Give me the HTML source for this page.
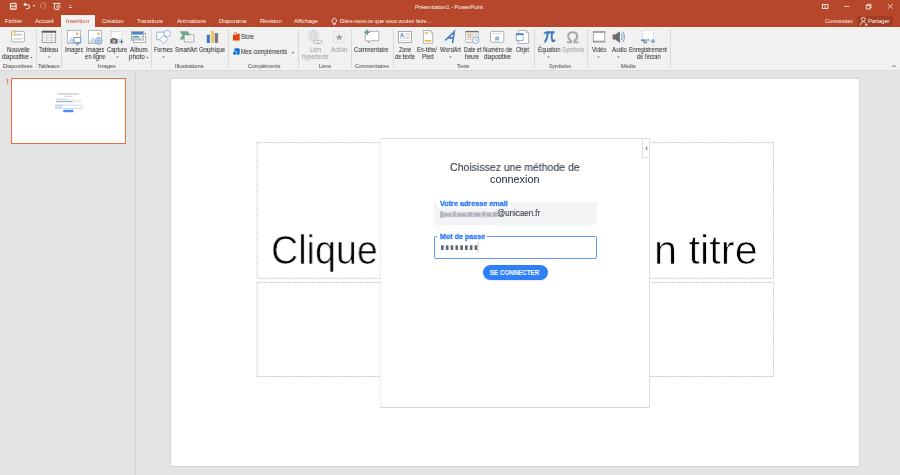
<!DOCTYPE html>
<html><head><meta charset="utf-8">
<style>
html,body{margin:0;padding:0;}
body{width:900px;height:475px;overflow:hidden;position:relative;background:#e4e4e4;font-family:"Liberation Sans",sans-serif;}
.a{position:absolute;}
.t{position:absolute;white-space:nowrap;line-height:1;transform-origin:0 0;will-change:transform;}
.sep{position:absolute;top:29px;width:1px;height:39px;background:#dadada;}
</style></head><body>
<div class="a" style="left:0;top:0;width:900px;height:27px;background:#b7472a"></div>
<div class="a" style="left:61px;top:15px;width:34px;height:12px;background:#f1f1f1"></div>
<div class="a" style="left:857px;top:15.5px;width:36px;height:10.5px;background:#a23e24"></div>
<div class="a" style="left:0;top:27px;width:900px;height:43px;background:#f1f1f1"></div>
<div class="a" style="left:0;top:70px;width:900px;height:1px;background:#d9d9d9"></div>
<div class="sep" style="left:36px"></div>
<div class="sep" style="left:61px"></div>
<div class="sep" style="left:151px"></div>
<div class="sep" style="left:228px"></div>
<div class="sep" style="left:298px"></div>
<div class="sep" style="left:351px"></div>
<div class="sep" style="left:392.5px"></div>
<div class="sep" style="left:534px"></div>
<div class="sep" style="left:586.5px"></div>
<div class="sep" style="left:670px"></div>
<!-- thumbnail pane separator -->
<div class="a" style="left:135px;top:71px;width:1px;height:404px;background:#d4d4d4"></div>
<!-- thumbnail -->
<div class="a" style="left:11px;top:78px;width:112.5px;height:63.5px;border:1.3px solid #ec6e47;background:#fff"></div>
<svg class="a" style="left:0;top:0" width="135" height="150" viewBox="0 0 135 150">
<rect x="57.8" y="93.3" width="21.4" height="1.2" fill="#c2c5ca"/>
<rect x="64.1" y="95.8" width="8" height="0.9" fill="#c8cbd0"/>
<rect x="55.3" y="99.5" width="26.8" height="3.5" fill="#eef0f3"/>
<rect x="55.9" y="98.8" width="11.2" height="0.8" fill="#b0cbf7"/>
<rect x="56" y="101" width="16.7" height="1" fill="#b0b4ba"/>
<rect x="55.4" y="105.1" width="26.6" height="3.5" fill="#fff" stroke="#a8c6f8" stroke-width="0.6"/>
<rect x="56" y="104.7" width="7" height="0.8" fill="#a8c6f8"/>
<rect x="56" y="106.6" width="6.4" height="1" fill="#c0c3c8"/>
<rect x="63" y="109.8" width="10.6" height="2.4" rx="1.2" fill="#4a8ef6"/>
</svg>
<svg class="a" style="left:0;top:72px" width="12" height="16" viewBox="0 72 12 16"><path d="M6 80.4 L7.6 79.2 V84.2" fill="none" stroke="#e8704a" stroke-width="0.9"/></svg>
<!-- slide -->
<div class="a" style="left:170px;top:78px;width:690px;height:389px;background:#d6d6d6"></div>
<div class="a" style="left:171px;top:79px;width:688px;height:387px;background:#fff"></div>
<!-- placeholders -->
<svg class="a" style="left:0;top:0" width="900" height="475" viewBox="0 0 900 475"><g fill="none" stroke="#c6c6c6" stroke-width="0.9" stroke-dasharray="2.6 0.9 1.6 0.9">
<rect x="257.2" y="142.6" width="516.3" height="135.7"/>
<rect x="257.2" y="282.5" width="516.3" height="94"/></g></svg>
<div class='t' style="left:415.35px;top:4.30px;font-size:6.0px;color:#ffffff;transform:scaleX(0.9319);">Présentation1 - PowerPoint</div>
<div class='t' style="left:4.54px;top:18.00px;font-size:6.0px;color:#ffffff;transform:scaleX(0.9573);">Fichier</div>
<div class='t' style="left:35.00px;top:18.00px;font-size:6.0px;color:#ffffff;transform:scaleX(0.9647);">Accueil</div>
<div class='t' style="left:66.16px;top:18.00px;font-size:6.0px;color:#c8462a;transform:scaleX(0.9997);">Insertion</div>
<div class='t' style="left:102.22px;top:18.00px;font-size:6.0px;color:#ffffff;transform:scaleX(0.9359);">Création</div>
<div class='t' style="left:137.29px;top:18.00px;font-size:6.0px;color:#ffffff;transform:scaleX(0.8926);">Transitions</div>
<div class='t' style="left:177.00px;top:18.00px;font-size:6.0px;color:#ffffff;transform:scaleX(0.9738);">Animations</div>
<div class='t' style="left:218.75px;top:18.00px;font-size:6.0px;color:#ffffff;transform:scaleX(0.9380);">Diaporama</div>
<div class='t' style="left:259.55px;top:18.00px;font-size:6.0px;color:#ffffff;transform:scaleX(0.9385);">Révision</div>
<div class='t' style="left:294.20px;top:18.00px;font-size:6.0px;color:#ffffff;transform:scaleX(0.9651);">Affichage</div>
<div class='t' style="left:339.56px;top:18.00px;font-size:6.0px;color:#ffffff;transform:scaleX(0.9087);">Dites-nous ce que vous voulez faire...</div>
<div class='t' style="left:824.71px;top:18.00px;font-size:6.0px;color:#ffffff;transform:scaleX(0.9636);">Connexion</div>
<div class='t' style="left:868.25px;top:18.00px;font-size:6.0px;color:#ffffff;transform:scaleX(0.9352);">Partager</div>
<div class='t' style="left:6.53px;top:47.10px;font-size:6.3px;color:#1a1a1a;transform:scaleX(0.9263);">Nouvelle</div>
<div class='t' style="left:2.27px;top:54.20px;font-size:6.3px;color:#1a1a1a;transform:scaleX(0.8989);">diapositive</div>
<div class='t' style="left:3.06px;top:64.00px;font-size:5.9px;color:#444444;transform:scaleX(0.9316);">Diapositives</div>
<div class='t' style="left:39.39px;top:47.10px;font-size:6.3px;color:#1a1a1a;transform:scaleX(0.8594);">Tableau</div>
<div class='t' style="left:38.39px;top:64.00px;font-size:5.9px;color:#444444;transform:scaleX(0.9172);">Tableaux</div>
<div class='t' style="left:64.50px;top:47.10px;font-size:6.3px;color:#1a1a1a;transform:scaleX(0.8806);">Images</div>
<div class='t' style="left:85.50px;top:47.10px;font-size:6.3px;color:#1a1a1a;transform:scaleX(0.8806);">Images</div>
<div class='t' style="left:84.77px;top:54.20px;font-size:6.3px;color:#1a1a1a;transform:scaleX(0.9278);">en ligne</div>
<div class='t' style="left:106.72px;top:47.10px;font-size:6.3px;color:#1a1a1a;transform:scaleX(0.8929);">Capture</div>
<div class='t' style="left:130.00px;top:47.10px;font-size:6.3px;color:#1a1a1a;transform:scaleX(0.9736);">Album</div>
<div class='t' style="left:129.13px;top:54.20px;font-size:6.3px;color:#1a1a1a;transform:scaleX(0.9915);">photo</div>
<div class='t' style="left:97.51px;top:64.00px;font-size:5.9px;color:#444444;transform:scaleX(0.9135);">Images</div>
<div class='t' style="left:154.06px;top:47.10px;font-size:6.3px;color:#1a1a1a;transform:scaleX(0.8726);">Formes</div>
<div class='t' style="left:174.75px;top:47.10px;font-size:6.3px;color:#1a1a1a;transform:scaleX(0.8961);">SmartArt</div>
<div class='t' style="left:199.22px;top:47.10px;font-size:6.3px;color:#1a1a1a;transform:scaleX(0.8840);">Graphique</div>
<div class='t' style="left:175.49px;top:64.00px;font-size:5.9px;color:#444444;transform:scaleX(0.9621);">Illustrations</div>
<div class='t' style="left:241.26px;top:34.00px;font-size:6.3px;color:#1a1a1a;transform:scaleX(0.8612);">Store</div>
<div class='t' style="left:241.04px;top:48.50px;font-size:6.3px;color:#1a1a1a;transform:scaleX(0.9029);">Mes compléments</div>
<div class='t' style="left:247.74px;top:64.00px;font-size:5.9px;color:#444444;transform:scaleX(0.8915);">Compléments</div>
<div class='t' style="left:309.54px;top:47.10px;font-size:6.3px;color:#9a9a9a;transform:scaleX(0.9073);">Lien</div>
<div class='t' style="left:301.63px;top:54.20px;font-size:6.3px;color:#9a9a9a;transform:scaleX(0.9044);">hypertexte</div>
<div class='t' style="left:331.00px;top:47.10px;font-size:6.3px;color:#9a9a9a;transform:scaleX(0.9343);">Action</div>
<div class='t' style="left:318.60px;top:64.00px;font-size:5.9px;color:#444444;transform:scaleX(0.8565);">Liens</div>
<div class='t' style="left:354.21px;top:47.10px;font-size:6.3px;color:#1a1a1a;transform:scaleX(0.9130);">Commentaire</div>
<div class='t' style="left:354.74px;top:64.00px;font-size:5.9px;color:#444444;transform:scaleX(0.8848);">Commentaires</div>
<div class='t' style="left:398.84px;top:47.10px;font-size:6.3px;color:#1a1a1a;transform:scaleX(0.8626);">Zone</div>
<div class='t' style="left:395.28px;top:54.20px;font-size:6.3px;color:#1a1a1a;transform:scaleX(0.8902);">de texte</div>
<div class='t' style="left:417.04px;top:47.10px;font-size:6.3px;color:#1a1a1a;transform:scaleX(0.9040);">En-tête/</div>
<div class='t' style="left:421.53px;top:54.20px;font-size:6.3px;color:#1a1a1a;transform:scaleX(0.9386);">Pied</div>
<div class='t' style="left:440.00px;top:47.10px;font-size:6.3px;color:#1a1a1a;transform:scaleX(0.9142);">WordArt</div>
<div class='t' style="left:463.57px;top:47.10px;font-size:6.3px;color:#1a1a1a;transform:scaleX(0.8590);">Date et</div>
<div class='t' style="left:465.14px;top:54.20px;font-size:6.3px;color:#1a1a1a;transform:scaleX(0.8741);">heure</div>
<div class='t' style="left:482.53px;top:47.10px;font-size:6.3px;color:#1a1a1a;transform:scaleX(0.9375);">Numéro de</div>
<div class='t' style="left:483.77px;top:54.20px;font-size:6.3px;color:#1a1a1a;transform:scaleX(0.9058);">diapositive</div>
<div class='t' style="left:456.90px;top:64.00px;font-size:5.9px;color:#444444;transform:scaleX(0.8733);">Texte</div>
<div class='t' style="left:515.75px;top:47.10px;font-size:6.3px;color:#1a1a1a;transform:scaleX(0.8810);">Objet</div>
<div class='t' style="left:537.55px;top:47.10px;font-size:6.3px;color:#1a1a1a;transform:scaleX(0.8965);">Équation</div>
<div class='t' style="left:561.74px;top:47.10px;font-size:6.3px;color:#9a9a9a;transform:scaleX(0.9179);">Symbole</div>
<div class='t' style="left:549.27px;top:64.00px;font-size:5.9px;color:#444444;transform:scaleX(0.8650);">Symboles</div>
<div class='t' style="left:592.00px;top:47.10px;font-size:6.3px;color:#1a1a1a;transform:scaleX(0.8895);">Vidéo</div>
<div class='t' style="left:611.50px;top:47.10px;font-size:6.3px;color:#1a1a1a;transform:scaleX(0.9146);">Audio</div>
<div class='t' style="left:629.05px;top:47.10px;font-size:6.3px;color:#1a1a1a;transform:scaleX(0.8887);">Enregistrement</div>
<div class='t' style="left:636.78px;top:54.20px;font-size:6.3px;color:#1a1a1a;transform:scaleX(0.8685);">de l'écran</div>
<div class='t' style="left:620.58px;top:64.00px;font-size:5.9px;color:#444444;transform:scaleX(0.8963);">Média</div>
<div class='t' style="left:271.12px;top:229.70px;font-size:40px;color:#000;-webkit-text-stroke:0.7px #fff;transform:scaleX(0.9412);">Clique</div>
<div class='t' style="left:654.30px;top:229.70px;font-size:40px;color:#000;-webkit-text-stroke:0.7px #fff;transform:scaleX(1.0366);">n titre</div>
<!-- dialog -->
<div class="a" style="left:380px;top:137.5px;width:270px;height:270px;background:#fff;border-top:1px solid #dcdcdc;border-bottom:1.2px solid #d9d9d9;border-left:1px solid #f0f0f0;border-right:1px solid #e2e2e2;box-sizing:border-box"></div>
<div class="a" style="left:642.3px;top:138.2px;width:7.3px;height:20.3px;border-left:1px solid #e2e2e2;border-bottom:1px solid #e2e2e2;box-sizing:border-box"></div>

<div class="a" style="left:434.2px;top:202.2px;width:162.5px;height:22.6px;background:#f3f4f6;border-radius:1.5px"></div>
<div class="a" style="left:437px;top:199px;width:73px;height:9px;background:#fff"></div>
<div class="a" style="left:434px;top:236px;width:162.5px;height:23px;border:1.1px solid #5c97f5;border-radius:2px;box-sizing:border-box"></div>
<div class="a" style="left:437px;top:232px;width:50px;height:8px;background:#fff"></div>
<div class="a" style="left:483px;top:264.8px;width:64.5px;height:15px;background:#2f80f8;border-radius:8px;box-shadow:0 0.5px 1px rgba(0,0,0,.15)"></div>
<div class='t' style="left:450.27px;top:161.80px;font-size:10.6px;color:#333c4a;-webkit-text-stroke:0.1px #333c4a;transform:scaleX(0.9927);">Choisissez une méthode de</div>
<div class='t' style="left:490.37px;top:173.50px;font-size:10.6px;color:#333c4a;-webkit-text-stroke:0.1px #333c4a;transform:scaleX(1.0243);">connexion</div>
<div class='t' style="left:439.96px;top:199.50px;font-size:7.0px;color:#2f7bf6;font-weight:bold;-webkit-text-stroke:0.3px #2f7bf6;transform:scaleX(1.0320);">Votre adresse email</div>
<div class='t' style="left:497.40px;top:209.40px;font-size:9.2px;color:#353d48;-webkit-text-stroke:0.15px #353d48;transform:scaleX(0.8706);">@unicaen.fr</div>
<div class='t' style="left:439.54px;top:232.60px;font-size:7.0px;color:#2f7bf6;font-weight:bold;-webkit-text-stroke:0.3px #2f7bf6;transform:scaleX(1.0190);">Mot de passe</div>
<div class='t' style="left:490.34px;top:269.50px;font-size:6.5px;color:#ffffff;font-weight:bold;-webkit-text-stroke:0.05px #fff;transform:scaleX(0.9539);">SE CONNECTER</div>
<svg class="a" style="left:0;top:0" width="900" height="475" viewBox="0 0 900 475">
<path d="M647.4 146.7 L645.9 148.3 L647.4 149.9" fill="none" stroke="#444" stroke-width="0.9"/>
<defs><filter id="bl2" x="-10%" y="-50%" width="120%" height="200%"><feGaussianBlur stdDeviation="0.35"/></filter><filter id="bl" x="-10%" y="-50%" width="120%" height="200%"><feGaussianBlur stdDeviation="0.55"/></filter></defs>
<g filter="url(#bl)">
<rect x="440" y="211.8" width="57.5" height="5.6" fill="#d9dbdf"/>
<g fill="#b3b7bd">
<rect x="440.3" y="211.4" width="3" height="6.4"/><rect x="444" y="213.2" width="7.5" height="3.4"/><rect x="452.8" y="211.6" width="3" height="5"/>
<rect x="457" y="213.2" width="9" height="3.4"/><rect x="467.5" y="212.3" width="5" height="4.3"/><rect x="474" y="212.8" width="6.5" height="3.8"/>
<rect x="482" y="211.6" width="3.4" height="5"/><rect x="486.6" y="212.8" width="4.5" height="3.8"/><rect x="492.5" y="212.3" width="4.6" height="4.4"/>
</g>
</g>
<g fill="#5f6774" filter="url(#bl2)">
<rect x="441" y="245.3" width="2.7" height="4.6" rx="0.4"/><rect x="445.8" y="245.3" width="2.7" height="4.6" rx="0.4"/>
<rect x="450.6" y="245.3" width="2.7" height="4.6" rx="0.4"/><rect x="455.4" y="245.3" width="2.7" height="4.6" rx="0.4"/>
<rect x="460.2" y="245.3" width="2.7" height="4.6" rx="0.4"/><rect x="465" y="245.3" width="2.7" height="4.6" rx="0.4"/>
<rect x="469.8" y="245.3" width="2.7" height="4.6" rx="0.4"/><rect x="474.6" y="245.3" width="2.7" height="4.6" rx="0.4"/>
</g>
<rect x="477.6" y="242" width="0.9" height="11" fill="#c4c4c4"/>
</svg>
<svg class="a" style="left:0;top:0" width="900" height="71" viewBox="0 0 900 71">
<!-- QAT -->
<path d="M10.4 3.4 H16.1 V9.2 H10.4Z M10.4 6.1 H16.1" fill="none" stroke="#fff" stroke-width="1"/>
<rect x="12.2" y="7.6" width="1.2" height="1.2" fill="#fff"/>
<path d="M23.3 4.6 L25.6 2.6 V6.6Z" fill="#fff"/>
<path d="M25 4.6 H27.4 A2.1 2.1 0 0 1 27.4 8.8 H26" fill="none" stroke="#fff" stroke-width="1"/>
<rect x="32.9" y="5.2" width="2" height="1" fill="#fff"/>
<path d="M45.3 4.5 A2.6 2.6 0 1 1 43.6 3.3" fill="none" stroke="#fff" stroke-opacity="0.4" stroke-width="0.8"/>
<path d="M43.3 2.6 L45.6 2.9 L45.2 5" fill="none" stroke="#fff" stroke-opacity="0.4" stroke-width="0.7"/>
<path d="M53.1 3.4 H60.7" stroke="#fff" stroke-width="0.9"/>
<path d="M54.4 3.6 V9.3 H57.2 M56.2 9.6 H59.2" fill="none" stroke="#fff" stroke-width="0.75"/>
<circle cx="58.4" cy="6.6" r="1.7" fill="none" stroke="#fff" stroke-width="0.7"/>
<circle cx="58.4" cy="6.6" r="0.6" fill="#fff"/>
<path d="M69 5.3 H71.6" stroke="#fff" stroke-width="0.6" stroke-opacity="0.8"/>
<path d="M68.9 7 H71.7 L71.3 7.9 H69.3Z" fill="#fff"/>
<!-- window controls -->
<g fill="none" stroke="#fff" stroke-width="0.8">
<rect x="822.3" y="4.4" width="5.7" height="4"/>
<path d="M825.1 5.2 V8"/>
<path d="M844.3 6.4 H849.5" stroke-width="0.7"/>
<rect x="866.2" y="5.3" width="3.8" height="3.7" stroke-width="0.75"/>
<path d="M867.2 5.3 V4.3 H871 V8 H870" stroke-width="0.75"/>
<path d="M887.9 4.2 L892.7 8.7 M892.7 4.2 L887.9 8.7" stroke-width="0.7"/>
</g>
<!-- lightbulb -->
<g fill="none" stroke="#fff" stroke-width="0.8">
<path d="M333.1 22.6 A2.3 2.3 0 1 1 335.5 22.6 V23.6 H333.1Z"/>
<path d="M333.2 24.6 H335.4"/>
</g>
<!-- person -->
<g fill="none" stroke="#fff" stroke-width="0.75">
<circle cx="863.3" cy="19.3" r="1.9"/>
<path d="M860.4 25.4 Q860.6 21.9 863.3 21.8 Q864.9 21.8 865.7 23"/>
<path d="M864.9 24.7 H867.5 M866.2 23.4 V26"/>
</g>
<!-- collapse ^ -->
<path d="M892.2 67.2 L894 65.3 L895.8 67.2" fill="none" stroke="#555" stroke-width="0.9"/>

<!-- Nouvelle diapositive -->
<rect x="11.6" y="31.3" width="12.8" height="10.6" rx="1" fill="#fff" stroke="#a6a6a6" stroke-width="0.9"/>
<rect x="13.6" y="33.8" width="8.6" height="1.9" fill="#cdcdcd"/>
<rect x="13.6" y="38.2" width="8.8" height="1.3" fill="#cdcdcd"/>
<g stroke="#ebc063" stroke-width="0.7"><path d="M13.2 29.6 V35.6 M10.2 32.6 H16.2 M11.1 30.5 L15.3 34.7 M15.3 30.5 L11.1 34.7"/></g>
<circle cx="13.2" cy="32.6" r="1.2" fill="#fff" stroke="#ebc063" stroke-width="0.5"/>
<!-- Tableau -->
<rect x="42.2" y="31.1" width="13.5" height="11.4" fill="#fff" stroke="#8a8a8a" stroke-width="0.8"/>
<rect x="42" y="30.9" width="13.9" height="1.8" fill="#595959"/>
<g stroke="#b0b0b0" stroke-width="0.6"><path d="M46.7 32.7 V42.5 M51.2 32.7 V42.5 M42.2 35.2 H55.7 M42.2 37.7 H55.7 M42.2 40.1 H55.7"/></g>
<!-- Images -->
<rect x="67.3" y="30.3" width="13" height="13.3" fill="#fff" stroke="#a6a6a6" stroke-width="0.8"/>
<path d="M67.7 43.2 L70.8 37.5 L72.3 37.5 L76.5 43.2Z" fill="#c7d7ec"/>
<circle cx="77.1" cy="33.8" r="1.3" fill="#e9b654"/>
<rect x="74" y="37.5" width="6.8" height="5" fill="#fff" stroke="#5d8fd1" stroke-width="0.9"/>
<path d="M77.4 42.6 V44.4 M76 44.6 H78.8" stroke="#5d8fd1" stroke-width="0.8"/>
<!-- Images en ligne -->
<rect x="88.5" y="30.3" width="13" height="13.3" fill="#fff" stroke="#a6a6a6" stroke-width="0.8"/>
<path d="M88.9 43.2 L92 37.5 L93.5 37.5 L97.7 43.2Z" fill="#c7d7ec"/>
<circle cx="98.4" cy="33.8" r="1.3" fill="#e9b654"/>
<circle cx="98.8" cy="40.8" r="3.4" fill="#e6eef8" stroke="#7aa2d6" stroke-width="0.8"/>
<path d="M95.4 40.8 H102.2 M98.8 37.4 V44.2" stroke="#7aa2d6" stroke-width="0.6"/>
<ellipse cx="98.8" cy="40.8" rx="1.5" ry="3.4" fill="none" stroke="#7aa2d6" stroke-width="0.6"/>
<!-- Capture -->
<rect x="111.3" y="31.5" width="10.5" height="8" fill="#fff" stroke="#9a9a9a" stroke-width="0.7" stroke-dasharray="0.8 1.2"/>
<rect x="110.3" y="39" width="7.4" height="4.6" rx="0.6" fill="#676767"/>
<rect x="112.2" y="38" width="3.4" height="1.4" fill="#676767"/>
<circle cx="114" cy="41.3" r="1.3" fill="#9a9a9a" stroke="#fff" stroke-width="0.4"/>
<path d="M119.3 41.7 H123.7 M121.5 39.5 V43.9" stroke="#3f7dc8" stroke-width="1"/>
<!-- Album photo -->
<rect x="133.3" y="33.4" width="12.4" height="9" fill="#fff" stroke="#a0a0a0" stroke-width="0.8"/>
<rect x="131.5" y="31.4" width="12.2" height="8.6" fill="#fff" stroke="#9a9a9a" stroke-width="0.8"/>
<rect x="132.1" y="32" width="10.9" height="2.6" fill="#4a86c8"/>
<path d="M132.1 36.6 Q136 34.8 139.5 36.5 V37.6 H132.1Z" fill="#5e9e7c"/>
<rect x="132.1" y="37.6" width="7.4" height="2" fill="#a9c3e2"/>
<path d="M139.2 39.8 L143.5 35.5" stroke="#777" stroke-width="0.7"/>
<!-- Formes -->
<g fill="#fff" stroke="#6f9bd5" stroke-width="0.7">
<rect x="156.8" y="32.1" width="8" height="7.7"/>
<circle cx="167.2" cy="33.6" r="3.2"/>
<path d="M163.7 35.3 L167.7 39.4 L163.7 43.6 L159.6 39.4Z"/>
</g>
<!-- SmartArt -->
<path d="M179.6 31.3 H187.5 L190.9 35.3 L187.5 39.4 H179.6 L182.4 35.3Z" fill="#6aa98b"/>
<rect x="184.2" y="35" width="9.7" height="7" fill="#fff" stroke="#9a9a9a" stroke-width="0.8"/>
<path d="M185.8 37.3 H192.3 M185.8 39.7 H192.3" stroke="#c8c8c8" stroke-width="0.7"/>
<!-- Graphique -->
<rect x="206.8" y="34.8" width="3.1" height="8.1" fill="#3a75c4"/>
<rect x="210.9" y="30.9" width="3.1" height="12" fill="#efc56b"/>
<rect x="214.7" y="33.1" width="3.4" height="9.8" fill="#7a7a7a"/>
<!-- Store -->
<path d="M232.9 35.2 L239.7 33.5 V40.6 H232.9Z" fill="#e8430f"/>
<path d="M234.2 34.8 V33.6 A1.2 1.2 0 0 1 236.6 33.6 V34.3" fill="none" stroke="#e8430f" stroke-width="0.7"/>
<!-- Mes complements -->
<path d="M235.5 48.3 H238.6 A1.1 1.1 0 0 1 239.7 49.4 V53.6 A1.1 1.1 0 0 1 238.6 54.7 H236.6 V51.3 H234.3 V49.5 A1.2 1.2 0 0 1 235.5 48.3Z" fill="#1072d4"/>
<circle cx="234.6" cy="53.2" r="1.6" fill="#1072d4"/>
<!-- dropdown arrows -->
<g fill="#555">
<path d="M30.05 57.20 H32.55 L31.30 58.60Z"/>
<path d="M47.85 56.40 H50.35 L49.10 57.80Z"/>
<path d="M116.15 56.40 H118.65 L117.40 57.80Z"/>
<path d="M146.05 57.20 H148.55 L147.30 58.60Z"/>
<path d="M162.25 56.40 H164.75 L163.50 57.80Z"/>
<path d="M291.75 52.00 H294.25 L293.00 53.40Z"/>
<path d="M449.25 56.40 H451.75 L450.50 57.80Z"/>
<path d="M547.25 56.40 H549.75 L548.50 57.80Z"/>
<path d="M597.25 56.40 H599.75 L598.50 57.80Z"/>
<path d="M617.25 56.40 H619.75 L618.50 57.80Z"/>
</g>
<!-- Lien hypertexte -->
<g fill="none" stroke="#cbc6c9" stroke-width="0.6">
<circle cx="313.7" cy="35.6" r="5.2"/>
<ellipse cx="313.7" cy="35.6" rx="2.4" ry="5.2"/>
<path d="M308.5 35.6 H318.9 M309.3 33 H318.1 M309.3 38.2 H318.1 M313.7 30.4 V40.8"/>
</g>
<g fill="#f1f1f1" stroke="#b3b3b3" stroke-width="0.9">
<rect x="313.5" y="40.2" width="5" height="3.3" rx="1.6"/>
<rect x="317.3" y="40.2" width="5" height="3.3" rx="1.6"/>
</g>
<!-- Action -->
<rect x="333.4" y="31.6" width="11.6" height="10.8" fill="none" stroke="#b5b5b5" stroke-width="0.5" stroke-dasharray="0.7 1"/>
<path d="M339.3 33.6 L340.3 36.2 L343 36.3 L340.9 38 L341.6 40.6 L339.3 39.1 L337 40.6 L337.7 38 L335.6 36.3 L338.3 36.2Z" fill="#a3a3a3"/>
<!-- Commentaire -->
<path d="M366.3 31.3 H377.8 A1 1 0 0 1 378.8 32.3 V39.8 A1 1 0 0 1 377.8 40.8 H370.3 L368.6 42.8 V40.8 H366.3 A1 1 0 0 1 365.3 39.8 V32.3 A1 1 0 0 1 366.3 31.3Z" fill="#fff" stroke="#8c8c8c" stroke-width="0.7"/>
<path d="M364.3 32.3 H369.7 M367 29.6 V35" stroke="#54a083" stroke-width="1.5"/>
<!-- Zone de texte -->
<rect x="398.5" y="31.5" width="13" height="11" fill="#fff" stroke="#9a9a9a" stroke-width="0.8"/>
<path d="M400.4 37.3 L402.1 33 L403.8 37.3 M401 35.9 H403.2" fill="none" stroke="#4a80c8" stroke-width="0.8"/>
<rect x="405" y="33.4" width="5.2" height="1.5" fill="#d0d0d0"/>
<rect x="405" y="36.3" width="5.2" height="1.5" fill="#d0d0d0"/>
<path d="M400 38.6 H410.2 M400 40.6 H410.2" stroke="#c8c8c8" stroke-width="0.6"/>
<!-- En-tete/Pied -->
<path d="M423.4 30.5 H430.5 L432.7 32.7 V43.4 H423.4Z" fill="#fff" stroke="#9a9a9a" stroke-width="0.7"/>
<path d="M430.3 30.5 V32.9 H432.7" fill="none" stroke="#9a9a9a" stroke-width="0.6"/>
<rect x="424.6" y="32.3" width="3.4" height="1.6" fill="#ebb54c"/>
<rect x="424.6" y="40" width="6.9" height="1.6" fill="#ebb54c"/>
<!-- WordArt -->
<path d="M445.6 39.8 Q449 37 454.3 31.6 L452.6 42.6 M448.3 37.9 H453.4" fill="none" stroke="#4a7fc4" stroke-width="1.6" stroke-linecap="round"/>
<!-- Date et heure -->
<rect x="465.8" y="31.2" width="12.4" height="11.2" fill="#fff" stroke="#9a9a9a" stroke-width="0.6"/>
<rect x="465.6" y="31" width="12.8" height="1.3" fill="#666"/>
<g stroke="#b8b8b8" stroke-width="0.5"><path d="M468.3 32.3 V42.4 M470.8 32.3 V42.4 M473.3 32.3 V42.4 M475.8 32.3 V42.4 M465.8 34.6 H478.2 M465.8 37 H478.2 M465.8 39.4 H478.2"/></g>
<rect x="468.3" y="34.3" width="2.4" height="2.8" fill="#fff" stroke="#e8903a" stroke-width="0.7"/>
<circle cx="475.6" cy="40.2" r="3.2" fill="#fff" stroke="#5b8ed0" stroke-width="0.7"/>
<path d="M475.6 38.4 V40.3 H477.2" fill="none" stroke="#5b8ed0" stroke-width="0.6"/>
<!-- Numero de diapositive -->
<rect x="490.5" y="31.4" width="13.3" height="10.9" rx="1" fill="#fff" stroke="#a0a0a0" stroke-width="0.8"/>
<path d="M492.2 33.6 H502.2" stroke="#cfcfcf" stroke-width="0.8"/>
<path d="M496.4 36.4 L495.7 40.8 M498.4 36.4 L497.7 40.8 M495.2 37.8 H499.2 M495 39.4 H499" stroke="#3f78c6" stroke-width="0.6"/>
<!-- Objet -->
<path d="M518.4 30.4 H526.2 L528.6 32.8 V43.5 H518.4Z" fill="#fff" stroke="#9a9a9a" stroke-width="0.7"/>
<path d="M526.1 30.4 V32.9 H528.6" fill="none" stroke="#9a9a9a" stroke-width="0.6"/>
<rect x="516.3" y="33.8" width="6.8" height="6.6" fill="#fff" stroke="#5b8ed0" stroke-width="0.7"/>
<rect x="516.1" y="33.6" width="7.2" height="1.5" fill="#3f78c6"/>
<!-- Equation pi -->
<path d="M543.4 34 Q544.3 31.3 546.6 31.3 H554.8 L554.4 33.5 H546.2 Q544.8 33.5 543.9 34.4Z" fill="#3d79c2"/>
<path d="M547.8 33 Q547.6 38.2 545.2 41.6" fill="none" stroke="#3d79c2" stroke-width="2" stroke-linecap="round"/>
<path d="M551.9 33 Q551.2 38 552.4 40.8 Q553.4 42 554.6 40.3" fill="none" stroke="#3d79c2" stroke-width="1.9" stroke-linecap="round"/>
<!-- Symbole omega -->
<path d="M567 42.3 H571 V40.8 Q568.2 39.2 568.2 36.3 Q568.2 32.2 572.7 32.2 Q577.2 32.2 577.2 36.3 Q577.2 39.2 574.4 40.8 V42.3 H578.4" fill="none" stroke="#a9a9a9" stroke-width="2"/>
<!-- Video -->
<rect x="593.3" y="31.5" width="11.5" height="10.6" fill="#fff" stroke="#888" stroke-width="0.7"/>
<rect x="593.3" y="31.5" width="11.5" height="1.4" fill="#888"/>
<rect x="593.3" y="40.7" width="11.5" height="1.4" fill="#888"/>
<g stroke="#fff" stroke-width="0.5"><path d="M595.3 31.5 V32.9 M597.3 31.5 V32.9 M599.3 31.5 V32.9 M601.3 31.5 V32.9 M603.3 31.5 V32.9 M595.3 40.7 V42.1 M597.3 40.7 V42.1 M599.3 40.7 V42.1 M601.3 40.7 V42.1 M603.3 40.7 V42.1"/></g>
<!-- Audio -->
<path d="M612.6 34.6 H615.2 L619.9 31.2 V42.9 L615.2 39.5 H612.6Z" fill="#6b6b6b"/>
<path d="M621.3 33.6 Q623.2 37 621.3 40.4 M622.8 31.8 Q625.9 37 622.8 42.2" fill="none" stroke="#5b8ed0" stroke-width="0.85"/>
<!-- Enregistrement -->
<rect x="642.5" y="30.3" width="11" height="9.6" fill="#fff" stroke="#a8a8a8" stroke-width="0.6" stroke-dasharray="0.8 1"/>
<rect x="641.2" y="39.4" width="4" height="1.7" fill="#4a80c8"/>
<rect x="643" y="41.2" width="4.2" height="2.3" fill="#a0a0a0"/>
<path d="M646.5 38.8 V41 M648.2 38.8 V41" stroke="#555" stroke-width="0.6"/>
<path d="M650.8 41.3 H655.2 M653 39.1 V43.5" stroke="#4a80c8" stroke-width="0.9"/>
</svg>

</body></html>
